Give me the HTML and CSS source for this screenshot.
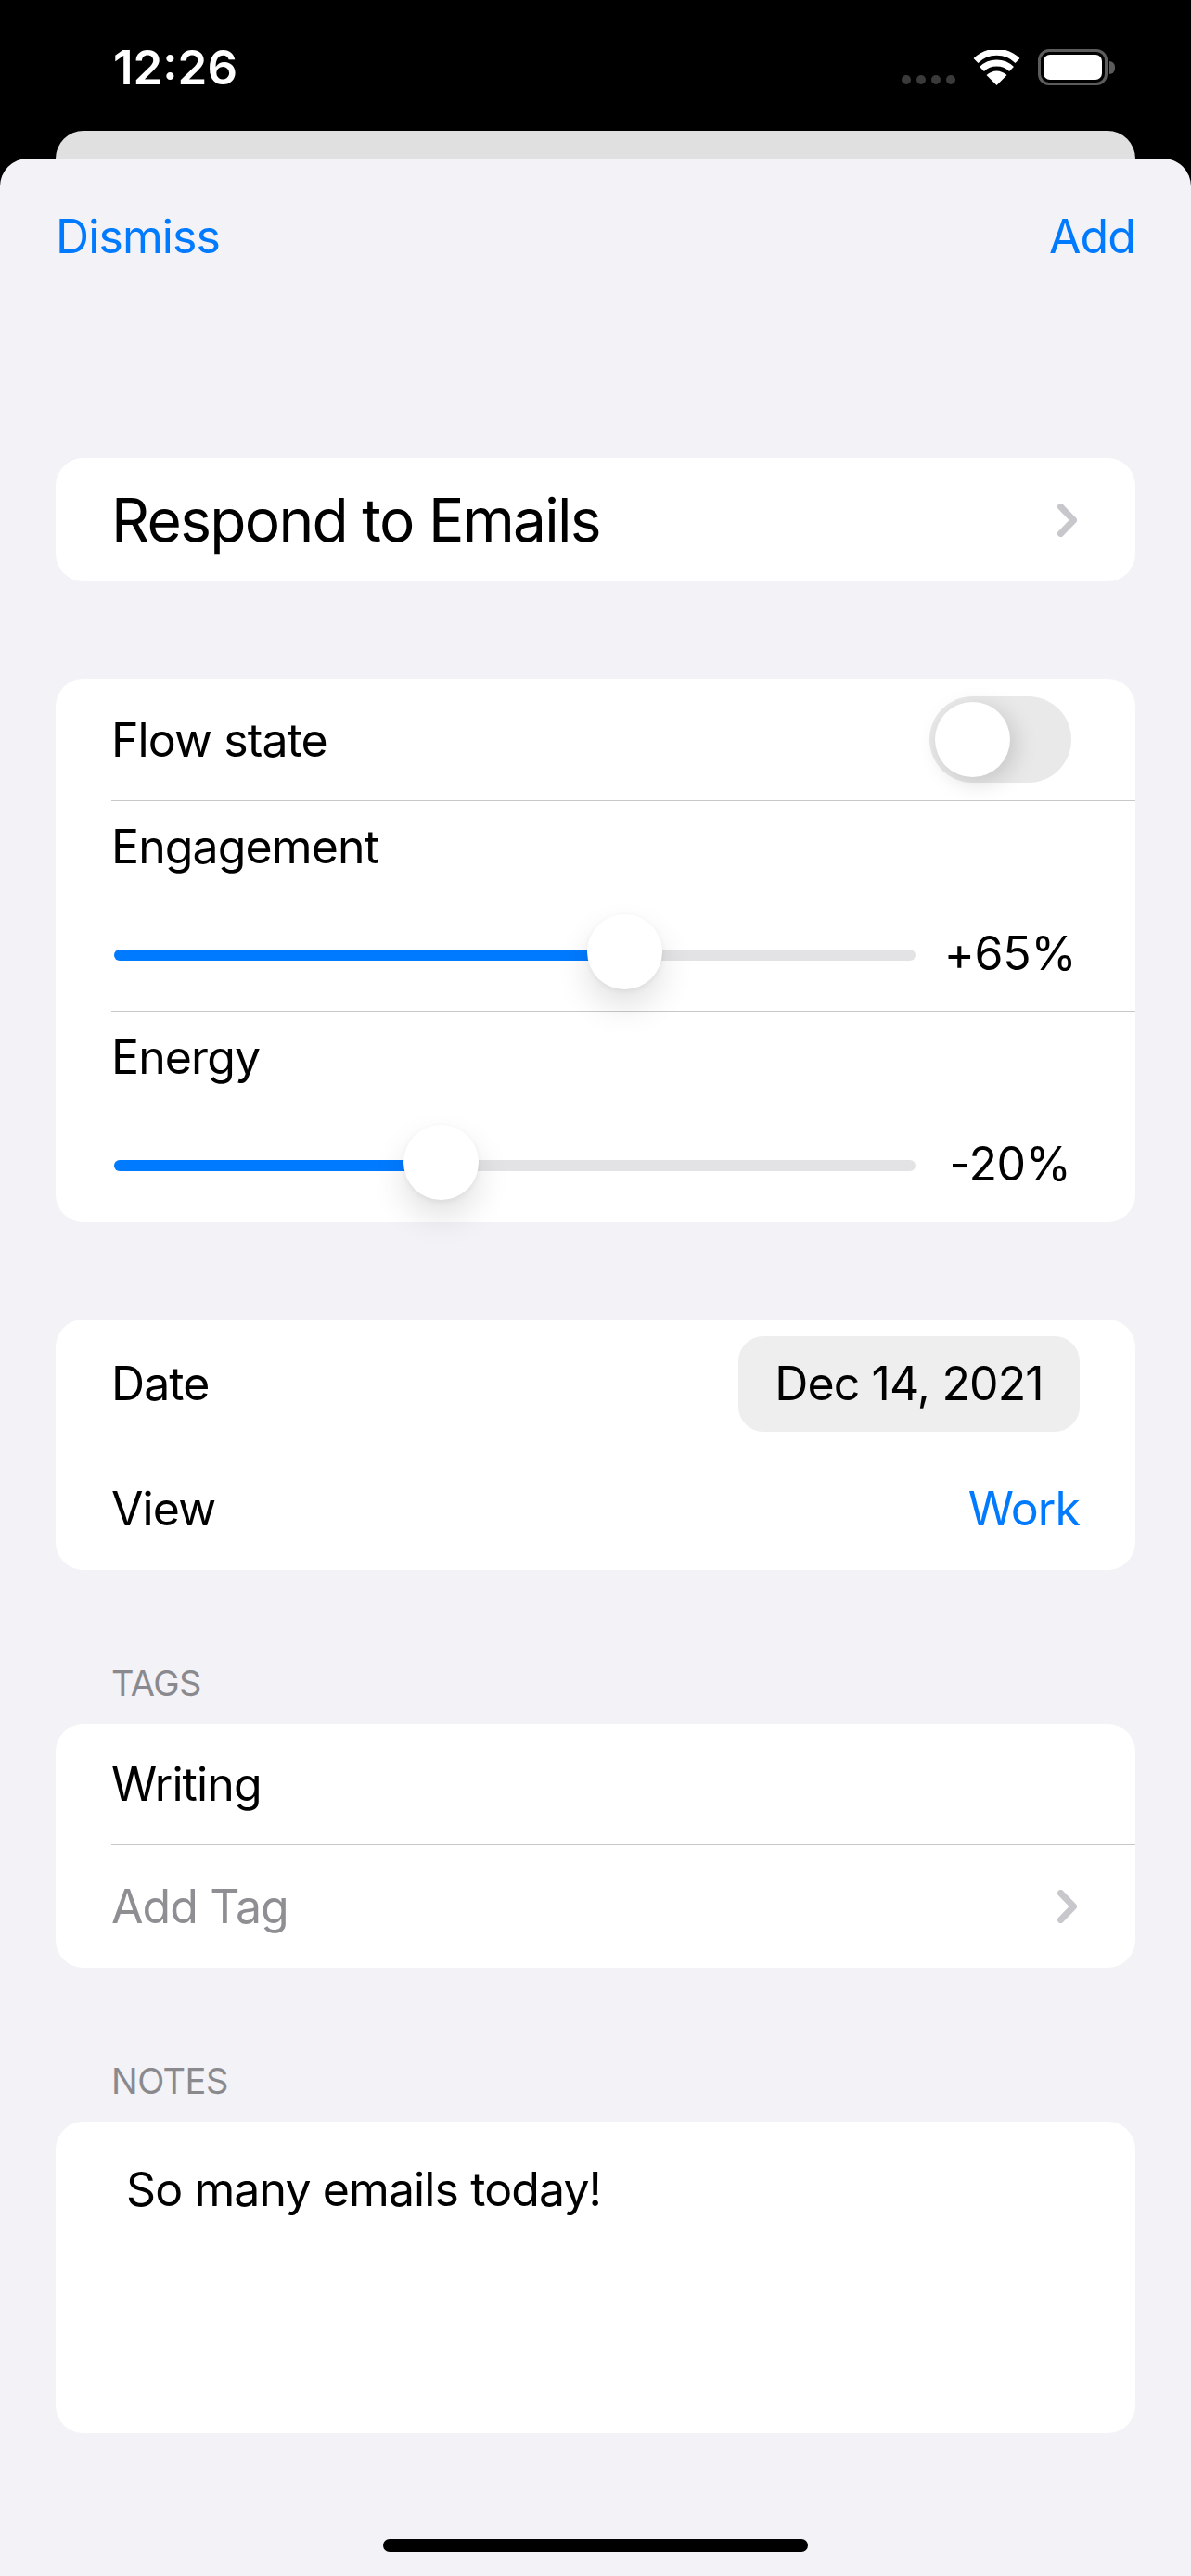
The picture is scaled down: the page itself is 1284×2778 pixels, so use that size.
FILE: index.html
```html
<!DOCTYPE html>
<html lang="en">
<head>
    <meta charset="UTF-8">
    <meta name="viewport" content="width=device-width, initial-scale=1.0">
    <title>Add Activity</title>
    <link rel="stylesheet" href="styles.css">
</head>
<body>
    <header class="status">
        <span class="time">12:26</span>
        <div class="status-icons">
            <div class="dots"><i></i><i></i><i></i><i></i></div>
            <svg class="wifi" width="51" height="38" viewBox="0 0 51 38">
                <path d="M25.5 38 L14.5 27 Q25.5 18 36.5 27 Z" fill="#fff"/>
                <path d="M9.5 20.5 A23 23 0 0 1 41.5 20.5" fill="none" stroke="#fff" stroke-width="7"/>
                <path d="M3 11.5 A32 32 0 0 1 48 11.5" fill="none" stroke="#fff" stroke-width="7"/>
            </svg>
            <div class="battery"><div class="battery-level"></div></div>
            <div class="battery-nub"></div>
        </div>
    </header>
    <div class="back-card"></div>
    <main class="sheet">
        <nav class="nav">
            <span class="link">Dismiss</span>
            <span class="link">Add</span>
        </nav>

        <section class="card">
            <div class="row title-row">
                <span class="title">Respond to Emails</span>
                <svg class="chevron" width="21" height="36" viewBox="0 0 21 36"><path d="M3.5 3.5 L17.5 18 L3.5 32.5" fill="none" stroke="#c7c7cc" stroke-width="7" stroke-linecap="round" stroke-linejoin="round"/></svg>
            </div>
        </section>

        <section class="card">
            <div class="row flow-row">
                <span>Flow state</span>
                <div class="toggle"><div class="knob"></div></div>
            </div>
            <div class="slider-row line">
                <span class="slider-label">Engagement</span>
                <div class="slider-line">
                    <div class="track">
                        <div class="fill" style="width: 550px"></div>
                        <div class="thumb" style="left: 510px"></div>
                    </div>
                    <span class="value">+65%</span>
                </div>
            </div>
            <div class="slider-row slider-last line">
                <span class="slider-label">Energy</span>
                <div class="slider-line">
                    <div class="track">
                        <div class="fill" style="width: 352px"></div>
                        <div class="thumb" style="left: 312px"></div>
                    </div>
                    <span class="value">-20%</span>
                </div>
            </div>
        </section>

        <section class="card">
            <div class="row date-row">
                <span>Date</span>
                <span class="pill">Dec 14, 2021</span>
            </div>
            <div class="row view-row line">
                <span>View</span>
                <span class="link">Work</span>
            </div>
        </section>

        <h2 class="section-head">TAGS</h2>
        <section class="card">
            <div class="row tag-row">
                <span>Writing</span>
            </div>
            <div class="row add-row line">
                <span class="muted">Add Tag</span>
                <svg class="chevron" width="21" height="36" viewBox="0 0 21 36"><path d="M3.5 3.5 L17.5 18 L3.5 32.5" fill="none" stroke="#c7c7cc" stroke-width="7" stroke-linecap="round" stroke-linejoin="round"/></svg>
            </div>
        </section>

        <h2 class="section-head">NOTES</h2>
        <section class="card notes">
            <p>So many emails today!</p>
        </section>

        <div class="home-bar"></div>
    </main>
</body>
</html>
```

FILE: styles.css
```css
* {
    margin: 0px;
    padding: 0px;
    box-sizing: border-box;
}

body {
    background-color: #000;
    font-family: Inter, "Liberation Sans", sans-serif;
    font-size: 50px;
    letter-spacing: -0.9px;
    color: #000;
    height: 2778px;
    overflow: hidden;
}

/* status bar */
.status {
    height: 141px;
    padding: 37px 82px 0 122px;
    display: flex;
    justify-content: space-between;
    align-items: flex-start;
    color: #fff;
}

.time {
    font-size: 51px;
    font-weight: 600;
    line-height: 72px;
    letter-spacing: 0;
}

.status-icons {
    display: flex;
    align-items: center;
    padding-top: 16px;
}

.dots {
    display: flex;
    gap: 6px;
    margin-right: 19px;
    padding-top: 26px;
}

.dots i {
    width: 10px;
    height: 10px;
    border-radius: 50%;
    background-color: #3a3a3a;
}

.wifi {
    margin-right: 19px;
}

.battery {
    width: 75px;
    height: 39px;
    border: 3px solid #5c5c5c;
    border-radius: 12px;
    padding: 3px;
}

.battery-level {
    height: 100%;
    background-color: #fff;
    border-radius: 7px;
}

.battery-nub {
    width: 6px;
    height: 14px;
    margin-left: 2px;
    background-color: #5c5c5c;
    border-radius: 0 7px 7px 0;
}

.back-card {
    height: 30px;
    margin: 0 60px;
    background-color: #e0e0e0;
    border-radius: 30px 30px 0 0;
}

.sheet {
    height: 2607px;
    background-color: #f2f2f7;
    border-radius: 30px 30px 0 0;
    padding: 0 60px;
    display: flex;
    flex-direction: column;
}

.nav {
    height: 323px;
    padding-top: 55px;
    display: flex;
    justify-content: space-between;
    align-items: flex-start;
    line-height: 58px;
}

.link {
    color: #007aff;
}

.muted {
    color: #8e8e93;
}

/* cards */
.card {
    background-color: #fff;
    border-radius: 30px;
    margin-bottom: 105px;
}

.row {
    display: flex;
    justify-content: space-between;
    align-items: center;
    padding-left: 60px;
}

.line {
    border-top: 1px solid #c8c8ca;
    margin-left: 60px;
    padding-left: 0;
}

.title-row {
    height: 133px;
    padding-right: 63px;
}

.title {
    font-size: 64px;
    letter-spacing: -1.7px;
}

.flow-row {
    height: 131px;
    padding-right: 69px;
}

.toggle {
    width: 153px;
    height: 93px;
    border-radius: 47px;
    background-color: #e9e9ea;
    padding: 6px;
}

.knob {
    width: 81px;
    height: 81px;
    border-radius: 50%;
    background-color: #fff;
    box-shadow: 6px 6px 24px rgba(0, 0, 0, 0.15);
}

.slider-row {
    height: 227px;
    padding-top: 20px;
}

.slider-last {
    height: 228px;
}

.slider-label {
    display: block;
    line-height: 58px;
}

.slider-line {
    display: flex;
    align-items: center;
    margin-top: 47px;
    height: 81px;
}

.track {
    position: relative;
    width: 864px;
    height: 12px;
    margin-left: 3px;
    background-color: #e3e3e5;
    border-radius: 6px;
}

.fill {
    height: 100%;
    background-color: #007aff;
    border-radius: 6px 0 0 6px;
}

.thumb {
    position: absolute;
    top: -38px;
    width: 81px;
    height: 81px;
    border-radius: 50%;
    background-color: #fff;
    box-shadow: 0 18px 36px rgba(0, 0, 0, 0.12), 0 2px 6px rgba(0, 0, 0, 0.06);
}

.value {
    width: 204px;
    text-align: center;
    letter-spacing: -0.3px;
    margin-top: -4px;
}

.date-row {
    height: 137px;
    padding-right: 60px;
}

.pill {
    width: 368px;
    height: 103px;
    line-height: 103px;
    margin-top: 1px;
    text-align: center;
    background-color: #eeeeef;
    border-radius: 27px;
}

.view-row {
    height: 133px;
    padding-right: 60px;
}

.section-head {
    font-size: 38px;
    font-weight: 400;
    letter-spacing: -0.5px;
    color: #8a8a8e;
    height: 61px;
    line-height: 34px;
    padding-left: 60px;
}

.tag-row {
    height: 130px;
    padding-right: 63px;
}

.add-row {
    height: 133px;
    padding-right: 63px;
}

.notes {
    height: 336px;
    padding: 44px 76px;
    margin-bottom: 0;
    line-height: 58px;
}

.home-bar {
    width: 458px;
    height: 14px;
    margin: 114px auto 0;
    background-color: #000;
    border-radius: 7px;
}
```
